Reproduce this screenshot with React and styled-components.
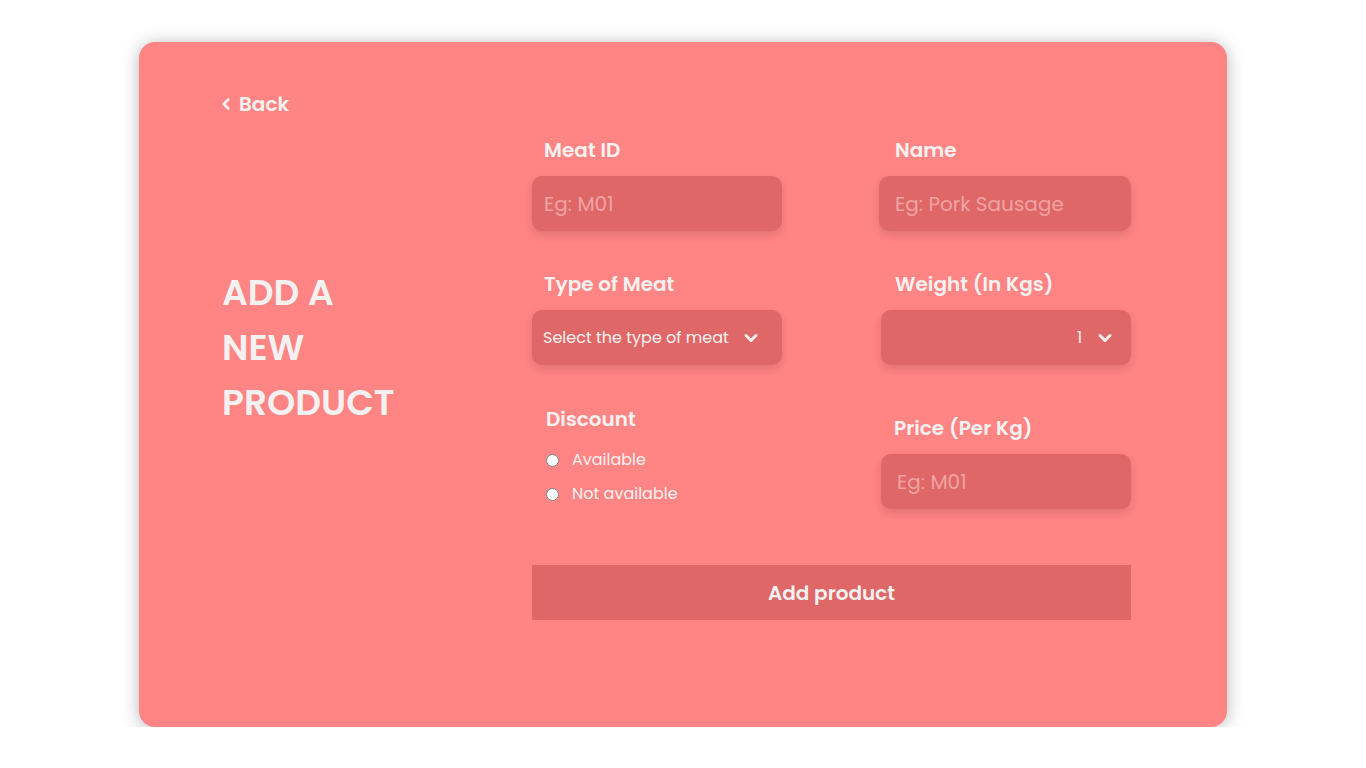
import React, { useState } from 'react';
import styled, { createGlobalStyle } from 'styled-components';
import { ChevronDown, ChevronLeft } from 'lucide-react';

const GlobalStyle = createGlobalStyle`
  body {
    margin: 0;
    background: #ffffff;
    font-family: Poppins, Inter, "Noto Sans", sans-serif;
  }
`;

const colors = {
  card: '#ff8484',
  field: '#df6767',
  text: '#f4f1f1',
  placeholder: '#efa3a3',
};

const Card = styled.div`
  width: 1088px;
  height: 685px;
  margin: 42px auto 0;
  box-sizing: border-box;
  padding: 0 96px 0 83px;
  background: ${colors.card};
  border-radius: 16px;
  box-shadow: 0 2px 18px rgba(0, 0, 0, 0.28);
  display: flex;
  align-items: flex-start;
`;

const Side = styled.div`
  width: 310px;
  padding-top: 50px;
`;

const BackLink = styled.a`
  display: inline-flex;
  align-items: center;
  gap: 4px;
  color: ${colors.text};
  font-size: 20px;
  font-weight: 600;
  line-height: 24px;
  text-decoration: none;
  cursor: pointer;
  margin-left: -5px;
`;

const Heading = styled.h1`
  margin: 145px 0 0;
  color: ${colors.text};
  font-size: 36px;
  font-weight: 600;
  line-height: 55px;
`;

const Form = styled.form`
  padding-top: 96px;
  display: grid;
  grid-template-columns: 250px 250px;
  column-gap: 99px;
  row-gap: 41px;
  align-items: start;
  align-content: start;
`;

const Field = styled.div`
  display: flex;
  flex-direction: column;
  margin-top: ${p => p.offset || 0}px;
  margin-left: ${p => p.shift || 0}px;
`;

const Label = styled.label`
  color: ${colors.text};
  font-size: 20px;
  font-weight: 600;
  line-height: 24px;
  padding-left: ${p => p.indent || 12}px;
  margin-bottom: 14px;
`;

const TextInput = styled.input`
  box-sizing: border-box;
  height: 55px;
  width: 100%;
  border: none;
  outline: none;
  border-radius: 10px;
  padding: 0 ${p => p.padLeft || 12}px;
  background: ${colors.field};
  box-shadow: 0 4px 8px rgba(0, 0, 0, 0.12);
  color: ${colors.text};
  font-family: inherit;
  font-size: 20px;

  &::placeholder {
    color: ${colors.placeholder};
  }
`;

const SelectWrap = styled.div`
  position: relative;
  height: 55px;
  border-radius: 10px;
  background: ${colors.field};
  box-shadow: 0 4px 8px rgba(0, 0, 0, 0.12);

  svg {
    position: absolute;
    right: ${p => p.iconRight}px;
    top: 50%;
    transform: translateY(-50%);
    pointer-events: none;
  }
`;

const Select = styled.select`
  appearance: none;
  box-sizing: border-box;
  width: 100%;
  height: 100%;
  border: none;
  outline: none;
  background: transparent;
  color: ${colors.text};
  font-family: inherit;
  font-size: 16px;
  padding: 0 ${p => p.padRight}px 0 11px;
  text-align: ${p => (p.alignRight ? 'right' : 'left')};
  text-align-last: ${p => (p.alignRight ? 'right' : 'left')};
  cursor: pointer;
`;

const RadioGroup = styled.div`
  display: flex;
  flex-direction: column;
  gap: 12px;
  margin-top: 4px;
  padding-left: 14px;
`;

const RadioOption = styled.label`
  display: flex;
  align-items: center;
  gap: 13px;
  color: ${colors.text};
  font-size: 16px;
  line-height: 22px;
  cursor: pointer;

  input {
    margin: 0;
    width: 13px;
    height: 13px;
  }
`;

const SubmitButton = styled.button`
  grid-column: 1 / -1;
  margin-top: 15px;
  height: 55px;
  border: none;
  background: ${colors.field};
  color: ${colors.text};
  font-family: inherit;
  font-size: 20px;
  font-weight: 600;
  cursor: pointer;
`;

export default function App() {
  const [discount, setDiscount] = useState('');

  return (
    <>
      <GlobalStyle />
      <Card>
        <Side>
          <BackLink>
            <ChevronLeft size={18} strokeWidth={3.5} />
            Back
          </BackLink>
          <Heading>
            ADD A
            <br />
            NEW
            <br />
            PRODUCT
          </Heading>
        </Side>

        <Form onSubmit={e => e.preventDefault()}>
          <Field>
            <Label>Meat ID</Label>
            <TextInput placeholder="Eg: M01" />
          </Field>
          <Field shift={-2}>
            <Label indent={16}>Name</Label>
            <TextInput placeholder="Eg: Pork Sausage" padLeft={16} />
          </Field>

          <Field>
            <Label>Type of Meat</Label>
            <SelectWrap iconRight={21}>
              <Select padRight={44} defaultValue="">
                <option value="" disabled>Select the type of meat</option>
                <option>Pork</option>
                <option>Beef</option>
                <option>Chicken</option>
              </Select>
              <ChevronDown size={20} strokeWidth={3.5} color={colors.text} />
            </SelectWrap>
          </Field>
          <Field>
            <Label indent={14}>Weight (In Kgs)</Label>
            <SelectWrap iconRight={16}>
              <Select padRight={49} alignRight defaultValue="1">
                <option>1</option>
                <option>2</option>
                <option>5</option>
              </Select>
              <ChevronDown size={20} strokeWidth={3.5} color={colors.text} />
            </SelectWrap>
          </Field>

          <Field offset={1}>
            <Label indent={14}>Discount</Label>
            <RadioGroup>
              <RadioOption>
                <input
                  type="radio"
                  name="discount"
                  checked={discount === 'yes'}
                  onChange={() => setDiscount('yes')}
                />
                Available
              </RadioOption>
              <RadioOption>
                <input
                  type="radio"
                  name="discount"
                  checked={discount === 'no'}
                  onChange={() => setDiscount('no')}
                />
                Not available
              </RadioOption>
            </RadioGroup>
          </Field>
          <Field offset={10}>
            <Label indent={13}>Price (Per Kg)</Label>
            <TextInput placeholder="Eg: M01" padLeft={16} />
          </Field>

          <SubmitButton type="submit">Add product</SubmitButton>
        </Form>
      </Card>
    </>
  );
}
